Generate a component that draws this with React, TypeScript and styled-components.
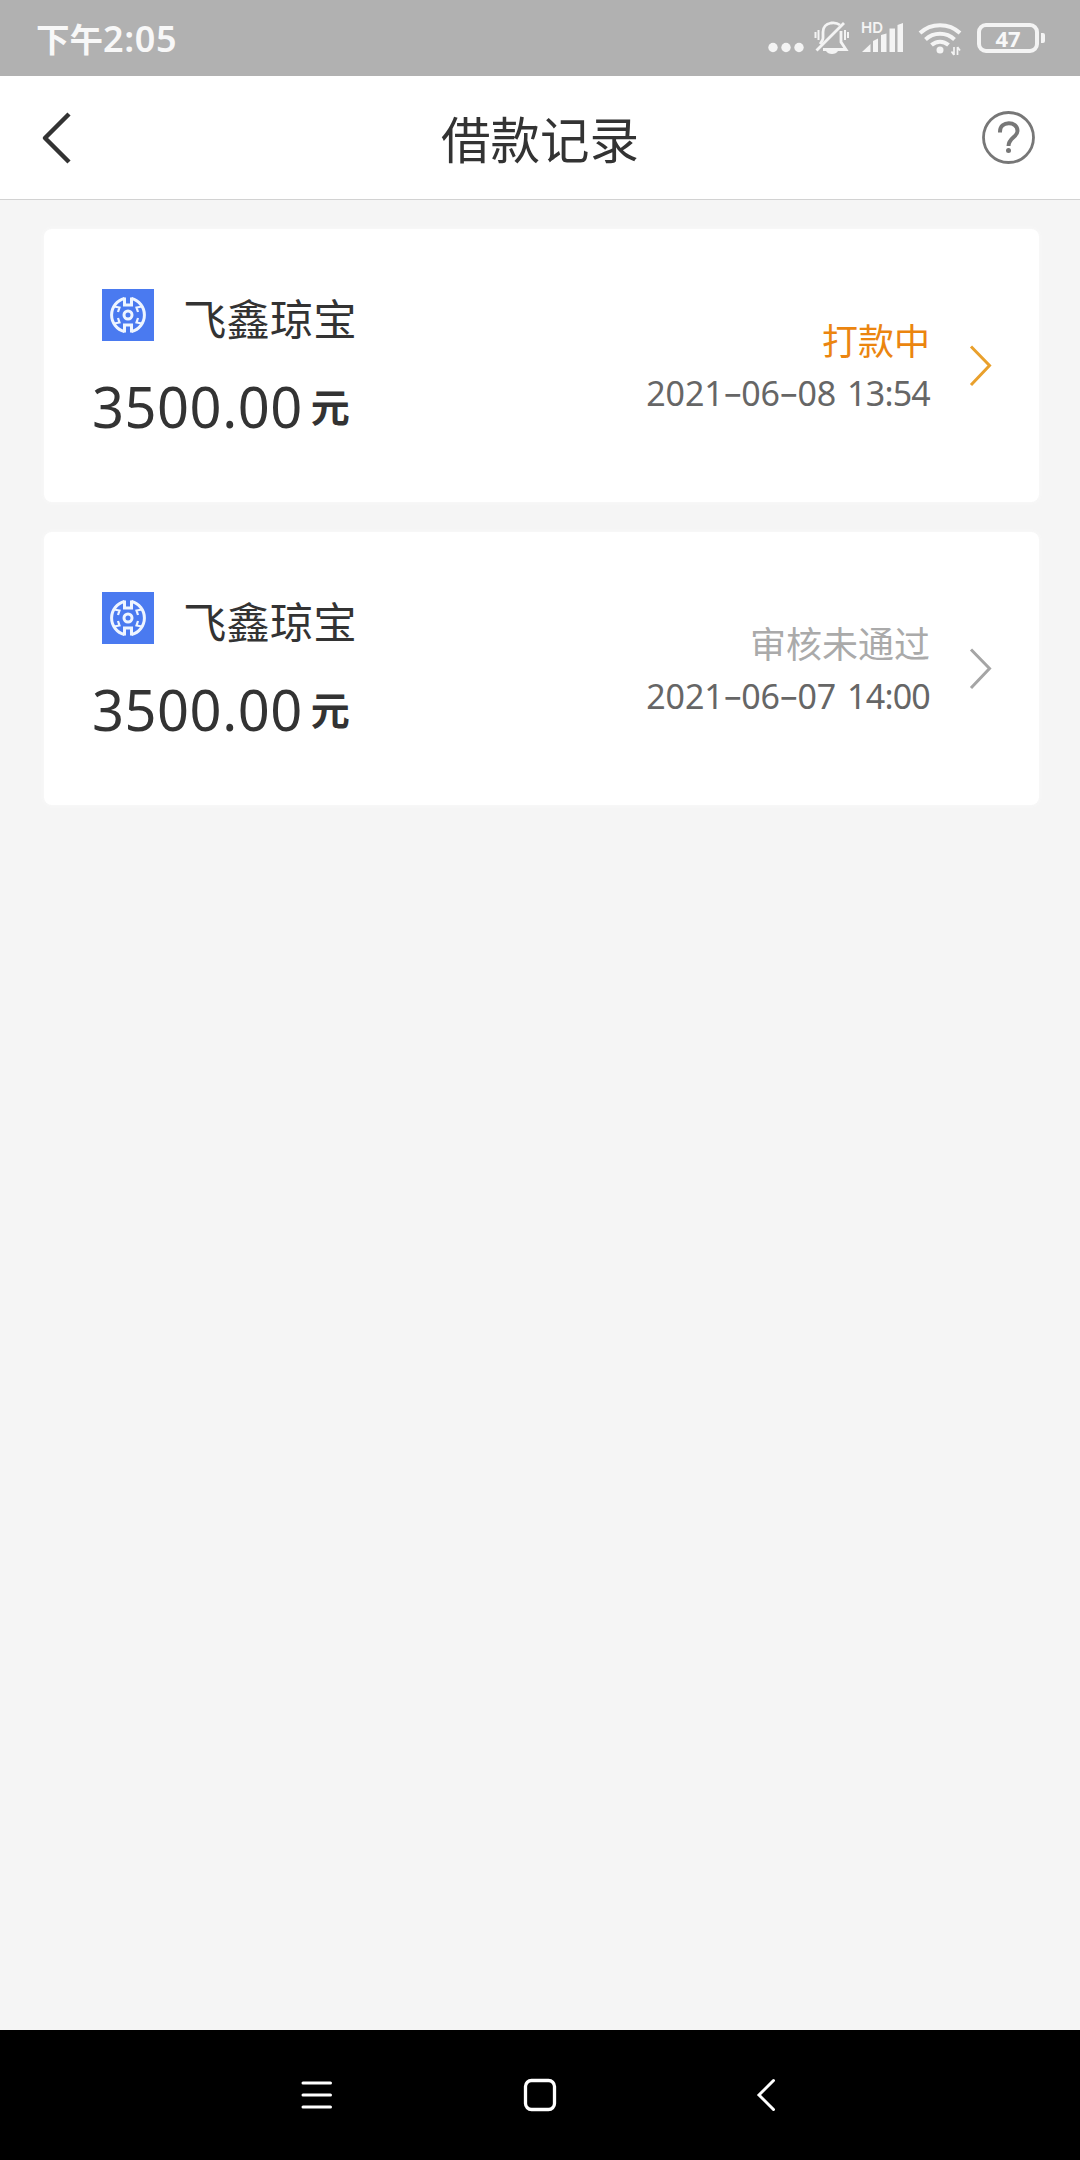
import React from 'react';
import styled, { createGlobalStyle } from 'styled-components';

const Global = createGlobalStyle`
  * { box-sizing: border-box; }
  body { margin: 0; background: #f5f5f5; }
  svg { display: block; flex: none; overflow: visible; }
`;

const Screen = styled.div`
  width: 1080px;
  height: 2160px;
  display: flex;
  flex-direction: column;
  background: #f5f5f5;
  color: #333;
  font-family: "Noto Sans", "Noto Sans CJK SC", sans-serif;
  overflow: hidden;
`;

const StatusBar = styled.div`
  height: 76px;
  flex: none;
  display: flex;
  align-items: center;
  justify-content: space-between;
  padding: 0 35px 0 36px;
  background: #b1b1b1;
  color: #f8f8f8;
`;

const Clock = styled.div`
  display: flex;
  align-items: baseline;
  padding-top: 2px;
  font-size: 33.5px;
  line-height: 74px;
  font-weight: 700;
`;

const ClockDigits = styled.span`
  font-size: 36px;
  font-weight: 600;
  letter-spacing: 0.6px;
`;

const StatusIcons = styled.div`
  height: 76px;
  display: flex;
  align-items: flex-start;
  padding-top: 20px;
`;

const IconSlot = styled.div<{ $gap: number }>`
  margin-left: ${(p) => p.$gap}px;
`;

const Battery = styled.div`
  display: flex;
  align-items: center;
  gap: 2px;
  margin: 3px 0 0 15px;
`;

const BatteryBody = styled.div`
  width: 62px;
  height: 30px;
  border: 4px solid #f4f4f4;
  border-radius: 9px;
  font-size: 22px;
  line-height: 22px;
  font-weight: 700;
  text-align: center;
`;

const BatteryTip = styled.div`
  width: 4px;
  height: 10px;
  border-radius: 0 2px 2px 0;
  background: #f4f4f4;
`;

const Header = styled.header`
  height: 124px;
  flex: none;
  display: grid;
  grid-template-columns: 120px 1fr 120px;
  align-items: center;
  background: #fff;
  border-bottom: 1px solid #d2d2d2;
`;

const Title = styled.h1`
  margin: 0;
  padding-top: 5px;
  text-align: center;
  font-size: 49.5px;
  line-height: 60px;
  font-weight: 400;
`;

const BackButton = styled.div`
  padding-left: 40px;
`;

const HelpButton = styled.div`
  padding-left: 20px;
`;

const List = styled.main`
  flex: 1;
  display: flex;
  flex-direction: column;
  gap: 30px;
  padding: 29px 41px 0 44px;
`;

const Card = styled.article`
  height: 273px;
  display: flex;
  align-items: flex-start;
  padding: 60px 46px 0 47px;
  background: #fff;
  border-radius: 8px;
  box-shadow: 0 0 4px #fafafa;
`;

const Loan = styled.div`
  flex: 1;
`;

const Lender = styled.div`
  display: flex;
  align-items: flex-start;
  gap: 29px;
  padding-left: 11px;
`;

const LenderName = styled.span`
  font-size: 43.4px;
  line-height: 62px;
`;

const Amount = styled.div`
  display: flex;
  align-items: center;
  font-size: 56px;
  line-height: 76px;
  letter-spacing: 0.5px;
  padding-left: 1px;
  margin-top: 16px;
`;

const Unit = styled.span`
  margin-left: 8px;
  padding-top: 2px;
  font-size: 39px;
  font-weight: 700;
`;

const State = styled.div`
  display: flex;
  flex-direction: column;
  align-items: flex-end;
  margin-top: 27px;
`;

const StateLabel = styled.span<{ $tone: string }>`
  color: ${(p) => p.$tone};
  font-size: 36px;
  line-height: 52px;
`;

const Stamp = styled.time`
  display: flex;
  gap: 11px;
  color: #666;
  font-size: 34px;
  line-height: 50px;
`;

const StampDay = styled.span`
  letter-spacing: -0.1px;
`;

const StampClock = styled.span`
  letter-spacing: -0.8px;
`;

const Dash = styled.span`
  display: inline-block;
  margin: 0 1px;
  font-family: Inter, "Noto Sans", sans-serif;
  transform: scaleX(1.35);
`;

const Chevron = styled.div`
  margin: 55px 0 0 39px;
`;

const NavBar = styled.nav`
  height: 130px;
  flex: none;
  display: flex;
  align-items: center;
  justify-content: center;
  gap: 188px;
  background: #000;
`;

type LoanRecord = { name: string; amount: string; state: string; tone: string; arrow: string; time: string };

const loans: LoanRecord[] = [
  { name: '飞鑫琼宝', amount: '3500.00', state: '打款中', tone: '#eb850f', arrow: '#e9a02c', time: '2021-06-08 13:54' },
  { name: '飞鑫琼宝', amount: '3500.00', state: '审核未通过', tone: '#aaa', arrow: '#a5a5a5', time: '2021-06-07 14:00' },
];

const LenderLogo = () => (
  <svg width="52" height="52" viewBox="0 0 52 52" fill="none">
    <rect width="52" height="52" fill="#4a7af0" />
    <g stroke="#eef5ff" strokeWidth="3">
      <path d="M22.500 9.500A17 17 0 0 0 22.500 42.500M29.500 9.500A17 17 0 0 1 29.500 42.500" />
      <path d="M22.500 8.500V16H29.500V8.500M22.500 43.500V36H29.500V43.500" />
      <path d="M12 17.500L17.500 18.500L16 23M40 17.500L34.500 18.500L36 23M12 34.500L17.500 33.500L16 29M40 34.500L34.500 33.500L36 29" strokeWidth="2.200" />
      <circle cx="26" cy="26" r="4" />
    </g>
  </svg>
);

const DateText = ({ value }: { value: string }) => {
  const [day, clock] = value.split(' ');
  return (
    <Stamp dateTime={value}>
      <StampDay>
        {day.split('-').map((part, i) => (
          <React.Fragment key={i}>
            {i > 0 && <Dash>-</Dash>}
            {part}
          </React.Fragment>
        ))}
      </StampDay>
      <StampClock>{clock}</StampClock>
    </Stamp>
  );
};

const DotsIcon = () => (
  <svg width="36" height="34" fill="#f4f4f4">
    <circle cx="5" cy="27.500" r="4.700" />
    <circle cx="18" cy="27.500" r="4.700" />
    <circle cx="31" cy="27.500" r="4.700" />
  </svg>
);

const MutedBellIcon = () => (
  <svg width="36" height="36" viewBox="0 0 36 36" fill="none" stroke="#f4f4f4" strokeWidth="2.800">
    <path d="M26 5C23.500 3 20 2.500 17 3C12 4 9 7.500 9 12V18C9 20 7.500 22 6 24" />
    <path d="M9 29.500H32L27 22V11" />
    <path d="M2.500 30.500L30 3" />
    <path d="M4.500 10V20M1.500 12V18M31 10V20M34 12V18" strokeWidth="2" />
    <path d="M12 31H24C22 35 14 35 12 31Z" fill="#f4f4f4" stroke="none" />
  </svg>
);

const SignalIcon = () => (
  <svg width="44" height="36" viewBox="0 0 44 36" fill="#f4f4f4">
    <text x="0" y="12.500" fontSize="15" fontWeight="600" fontFamily="Inter, sans-serif">HD</text>
    <path d="M1 32L9.500 24V32ZM12 21L17 18.500V32H12ZM20 15L25.500 13.500V32H20ZM28.500 8.500H34V32H28.500ZM36.500 5L42 3V32H36.500Z" />
  </svg>
);

const WifiIcon = () => (
  <svg width="44" height="38" viewBox="0 0 44 38" fill="none" stroke="#f4f4f4" strokeWidth="4">
    <path d="M2 13C13 2.500 31 2.500 42 13M7.500 19.500C15.500 11.800 28.500 11.800 36.500 19.500M13.500 25C18.500 20.500 25.500 20.500 30.500 25" />
    <circle cx="22" cy="30" r="3.500" fill="#f4f4f4" stroke="none" />
    <path d="M36 27V35M39.500 27V35M33.500 31.500L36 35M42 30.500L39.500 27" strokeWidth="1.700" />
  </svg>
);

const RightArrow = ({ color }: { color: string }) => (
  <svg width="24" height="44" fill="none" stroke={color} strokeWidth="3">
    <path d="M2 2.500L20.500 21.500L2 41" />
  </svg>
);

export default function App() {
  return (
    <Screen>
      <Global />
      <StatusBar>
        <Clock>下午<ClockDigits>2:05</ClockDigits></Clock>
        <StatusIcons>
          <IconSlot $gap={0}><DotsIcon /></IconSlot>
          <IconSlot $gap={10}><MutedBellIcon /></IconSlot>
          <IconSlot $gap={11}><SignalIcon /></IconSlot>
          <IconSlot $gap={13}><WifiIcon /></IconSlot>
          <Battery>
            <BatteryBody>47</BatteryBody>
            <BatteryTip />
          </Battery>
        </StatusIcons>
      </StatusBar>
      <Header>
        <BackButton>
          <svg width="34" height="56" fill="none" stroke="#333" strokeWidth="4.500" strokeLinejoin="round">
            <path d="M29 4L5 28L29 52" />
          </svg>
        </BackButton>
        <Title>借款记录</Title>
        <HelpButton>
          <svg width="56" height="56" viewBox="0 0 56 56" fill="none" stroke="#777">
            <circle cx="28.500" cy="27.500" r="25" strokeWidth="2.800" />
            <path d="M20 22.500V21.500C20 10.500 37.500 10.500 37.500 21C37.500 27 28.500 28 28.500 36" strokeWidth="4" />
            <circle cx="28.500" cy="40.500" r="2.500" fill="#777" stroke="none" />
          </svg>
        </HelpButton>
      </Header>
      <List>
        {loans.map((loan) => (
          <Card key={loan.time}>
            <Loan>
              <Lender>
                <LenderLogo />
                <LenderName>{loan.name}</LenderName>
              </Lender>
              <Amount>{loan.amount}<Unit>元</Unit></Amount>
            </Loan>
            <State>
              <StateLabel $tone={loan.tone}>{loan.state}</StateLabel>
              <DateText value={loan.time} />
            </State>
            <Chevron><RightArrow color={loan.arrow} /></Chevron>
          </Card>
        ))}
      </List>
      <NavBar>
        <svg width="36" height="36" stroke="#fff" strokeWidth="3" strokeLinecap="round">
          <path d="M5 6H32.500M5 18H32.500M5 30H32.500" />
        </svg>
        <svg width="36" height="36" fill="none" stroke="#fff" strokeWidth="3.300">
          <rect x="3.500" y="3.500" width="29" height="29" rx="6" />
        </svg>
        <svg width="36" height="36" fill="none" stroke="#fff" strokeWidth="3" strokeLinecap="round">
          <path d="M27.500 3.500L13 18L27.500 32.500" />
        </svg>
      </NavBar>
    </Screen>
  );
}
